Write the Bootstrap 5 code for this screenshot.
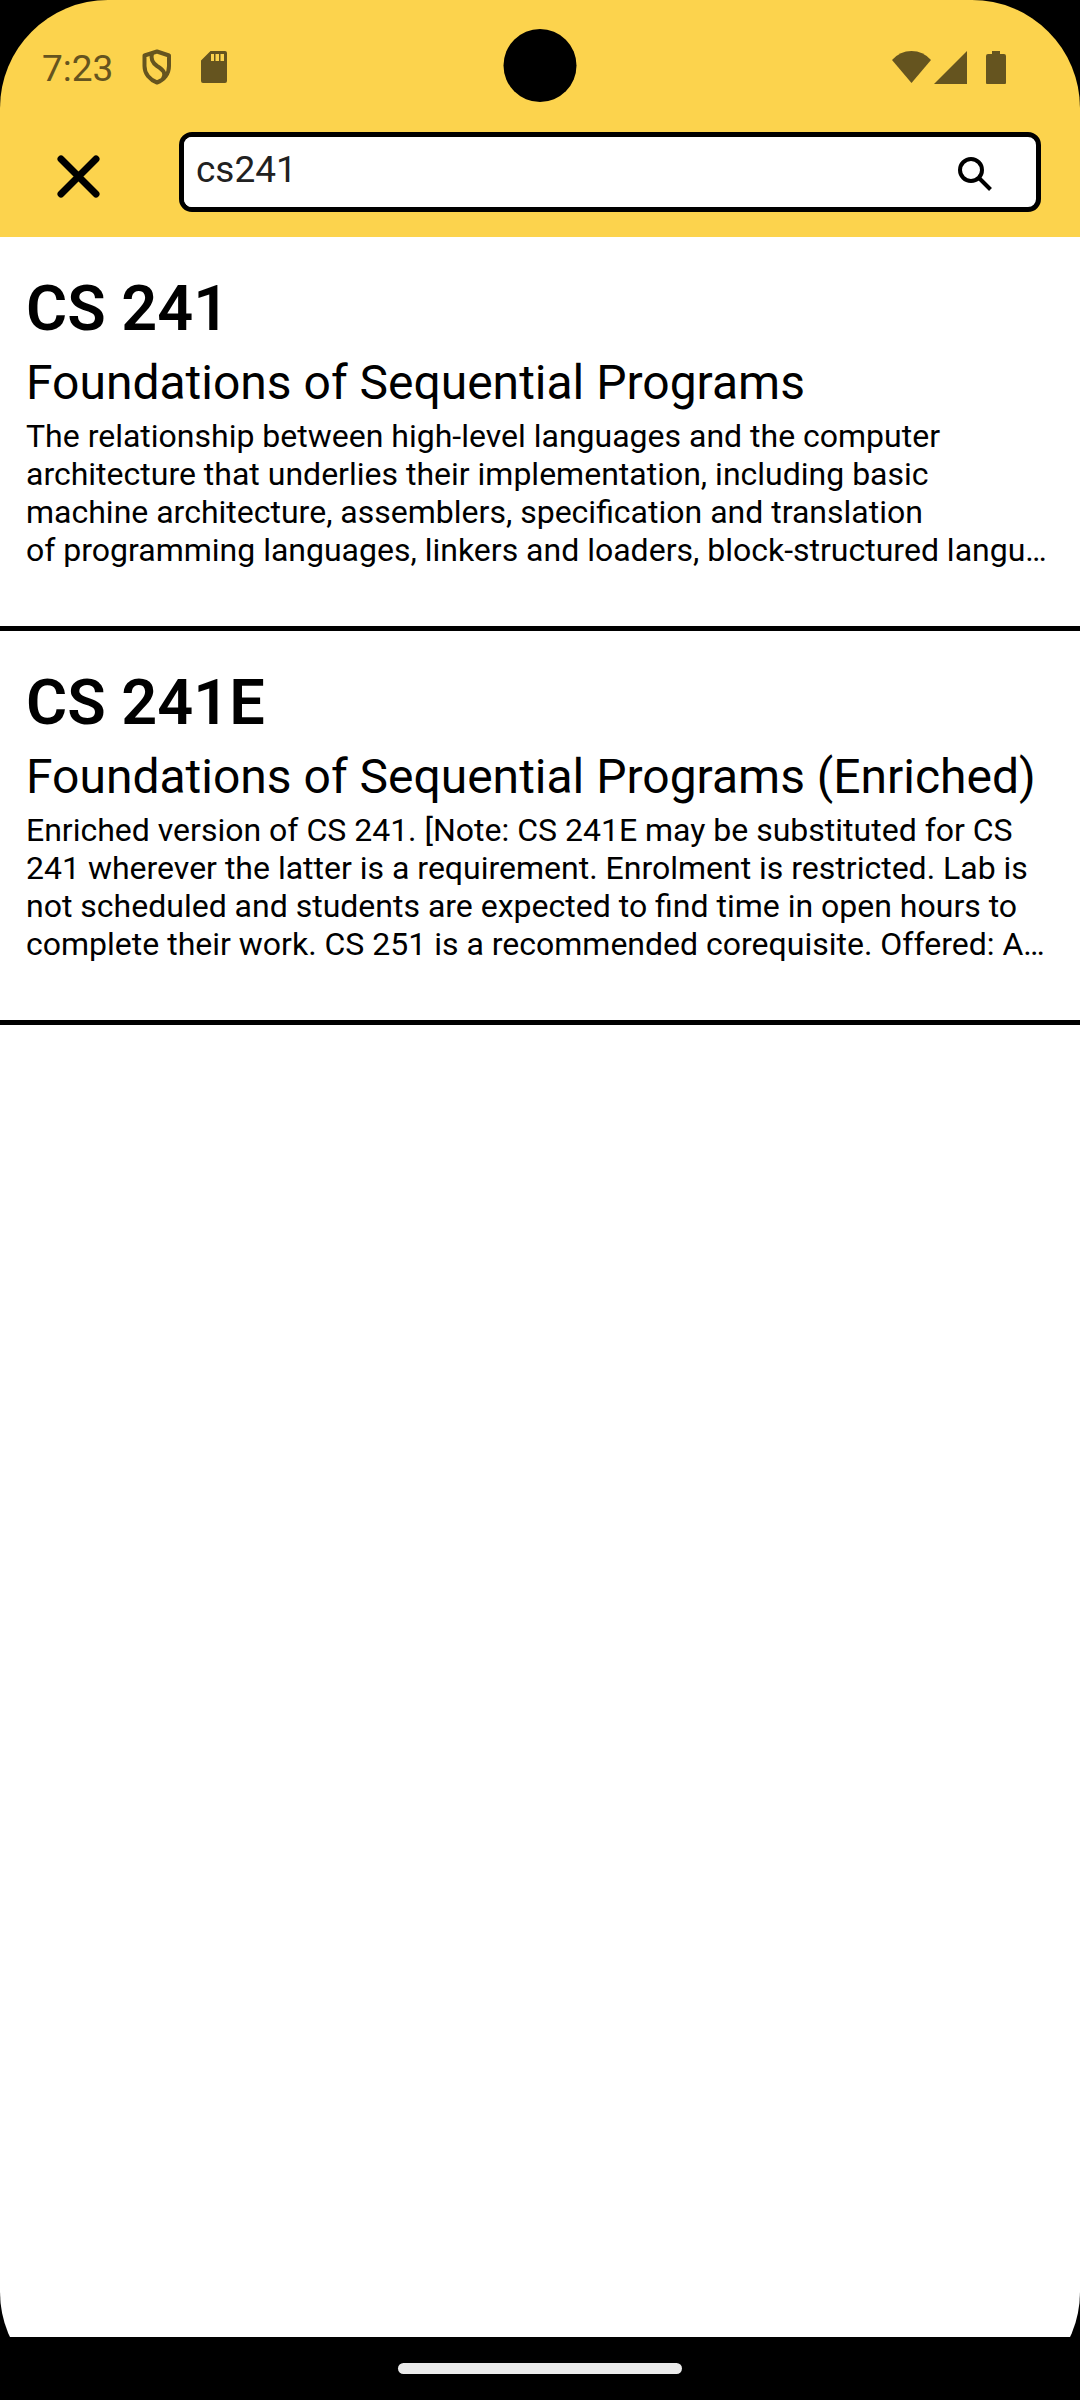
<!DOCTYPE html>
<html lang="en">
<head>
<meta charset="utf-8">
<meta name="viewport" content="width=device-width, initial-scale=1">
<title>Course search</title>
<link href="https://cdn.jsdelivr.net/npm/bootstrap@5.3.0/dist/css/bootstrap.min.css" rel="stylesheet">
<style>
  body { background: #000; color: #000; font-family: Roboto, "Liberation Sans", sans-serif; }
  .app-screen { background: #000; border-radius: 108px; }
  .app-header { background: #fcd34d; }
  .status-bar { height: 132px; padding: 2px 74px 0 42px; color: #65541f; }
  .status-time { font-size: 37px; line-height: 44px; padding-top: 4px; }
  .status-left { gap: 29px; }
  .camera-dot { width: 73px; height: 73px; top: 29px; background: #000; }
  .search-row { padding: 0 39px 25px 54px; gap: 75px; }
  .close-btn { width: 50px; height: 50px; margin-top: 20px; }
  .search-box { height: 80px; border: 5px solid #000; border-radius: 13px; }
  .search-field { font-size: 37px; line-height: 44px; padding: 0 12px 4px; color: #212121; }
  .search-field:focus { box-shadow: none; }
  .search-btn { width: 50px; margin-right: 36px; padding: 4px 0 0; }
  .course { padding: 35px 26px 57px; border-bottom: 5px solid #000; }
  .course-code { font-size: 63px; line-height: 74px; font-weight: 600; margin-bottom: 9px; }
  .course-title { font-size: 48px; line-height: 56px; font-weight: 400; margin-bottom: 6px; }
  .course-text { font-size: 32px; line-height: 38px; }
  .nav-strip { height: 63px; background: #000; }
  .nav-handle { width: 284px; height: 11px; background: #ebebeb; }
</style>
<script src="https://cdn.jsdelivr.net/npm/bootstrap@5.3.0/dist/js/bootstrap.bundle.min.js"></script>
</head>
<body>
<div class="app-screen min-vh-100 d-flex flex-column overflow-hidden position-relative">
  <div class="camera-dot position-absolute start-50 translate-middle-x rounded-circle"></div>
  <header class="app-header">
    <div class="status-bar d-flex align-items-center justify-content-between">
      <div class="status-left d-flex align-items-center">
        <span class="status-time">7:23</span>
        <svg width="30" height="36" viewBox="0 0 30 36" fill="none" stroke="currentColor" stroke-width="4" aria-hidden="true">
          <path d="M15 2.500 27 6.500V17c0 8-5 14-12 16.500C8 31 2.500 25 2.500 17V6.500Z" stroke-linejoin="round"/>
          <path d="M10 4.500c-1.500 5.500 0 9 5 12.500 7 4.500 9 7 6 13"/>
        </svg>
        <svg width="26" height="32" viewBox="0 0 26 32" fill="currentColor" fill-rule="evenodd" aria-hidden="true">
          <path d="M9.500 0H24a2 2 0 0 1 2 2V30a2 2 0 0 1-2 2H2a2 2 0 0 1-2-2V9.500ZM10 3V10H13V3ZM14.500 3V10H18V3ZM19.500 3V10H23V3Z"/>
        </svg>
      </div>
      <svg width="114" height="33" viewBox="0 0 114 33" fill="currentColor" aria-hidden="true">
        <path d="M0 9Q8 0 19.500 0T39 9L19.500 32Z"/>
        <path d="M75 0V33H42Z"/>
        <path d="M100 0h8v3h4a2 2 0 0 1 2 2V32a1 1 0 0 1-1 1H95a1 1 0 0 1-1-1V5a2 2 0 0 1 2-2h4Z"/>
      </svg>
    </div>
    <form class="search-row d-flex" onsubmit="return false">
      <button type="button" class="close-btn btn p-0 border-0 d-flex flex-shrink-0 align-items-center justify-content-center" aria-label="Close">
        <svg width="50" height="50" viewBox="0 0 50 50" stroke="#000" stroke-width="7" stroke-linecap="round" aria-hidden="true"><path d="M7 7 42 42M42 7 7 42"/></svg>
      </button>
      <div class="search-box d-flex flex-grow-1 bg-white overflow-hidden">
        <input type="text" class="search-field form-control border-0 rounded-0 bg-white" value="cs241" aria-label="Search courses">
        <button type="submit" class="search-btn btn border-0 flex-shrink-0 d-flex align-items-center justify-content-center" aria-label="Search">
          <svg width="38" height="38" viewBox="0 0 38 38" fill="none" stroke="#000" stroke-width="4" aria-hidden="true"><circle cx="15" cy="15" r="11"/><path d="M23 23 34.500 34.500"/></svg>
        </button>
      </div>
    </form>
  </header>
  <main class="flex-grow-1 bg-white">
    <article class="course">
      <h1 class="course-code">CS 241</h1>
      <h2 class="course-title">Foundations of Sequential Programs</h2>
      <p class="course-text mb-0 text-nowrap">The relationship between high-level languages and the computer<br>architecture that underlies their implementation, including basic<br>machine architecture, assemblers, specification and translation<br>of programming languages, linkers and loaders, block-structured langu…</p>
    </article>
    <article class="course">
      <h1 class="course-code">CS 241E</h1>
      <h2 class="course-title">Foundations of Sequential Programs (Enriched)</h2>
      <p class="course-text mb-0 text-nowrap">Enriched version of CS 241. [Note: CS 241E may be substituted for CS<br>241 wherever the latter is a requirement. Enrolment is restricted. Lab is<br>not scheduled and students are expected to find time in open hours to<br>complete their work. CS 251 is a recommended corequisite. Offered: A…</p>
    </article>
  </main>
  <footer class="nav-strip d-flex align-items-center justify-content-center">
    <div class="nav-handle rounded-pill"></div>
  </footer>
</div>
</body>
</html>
